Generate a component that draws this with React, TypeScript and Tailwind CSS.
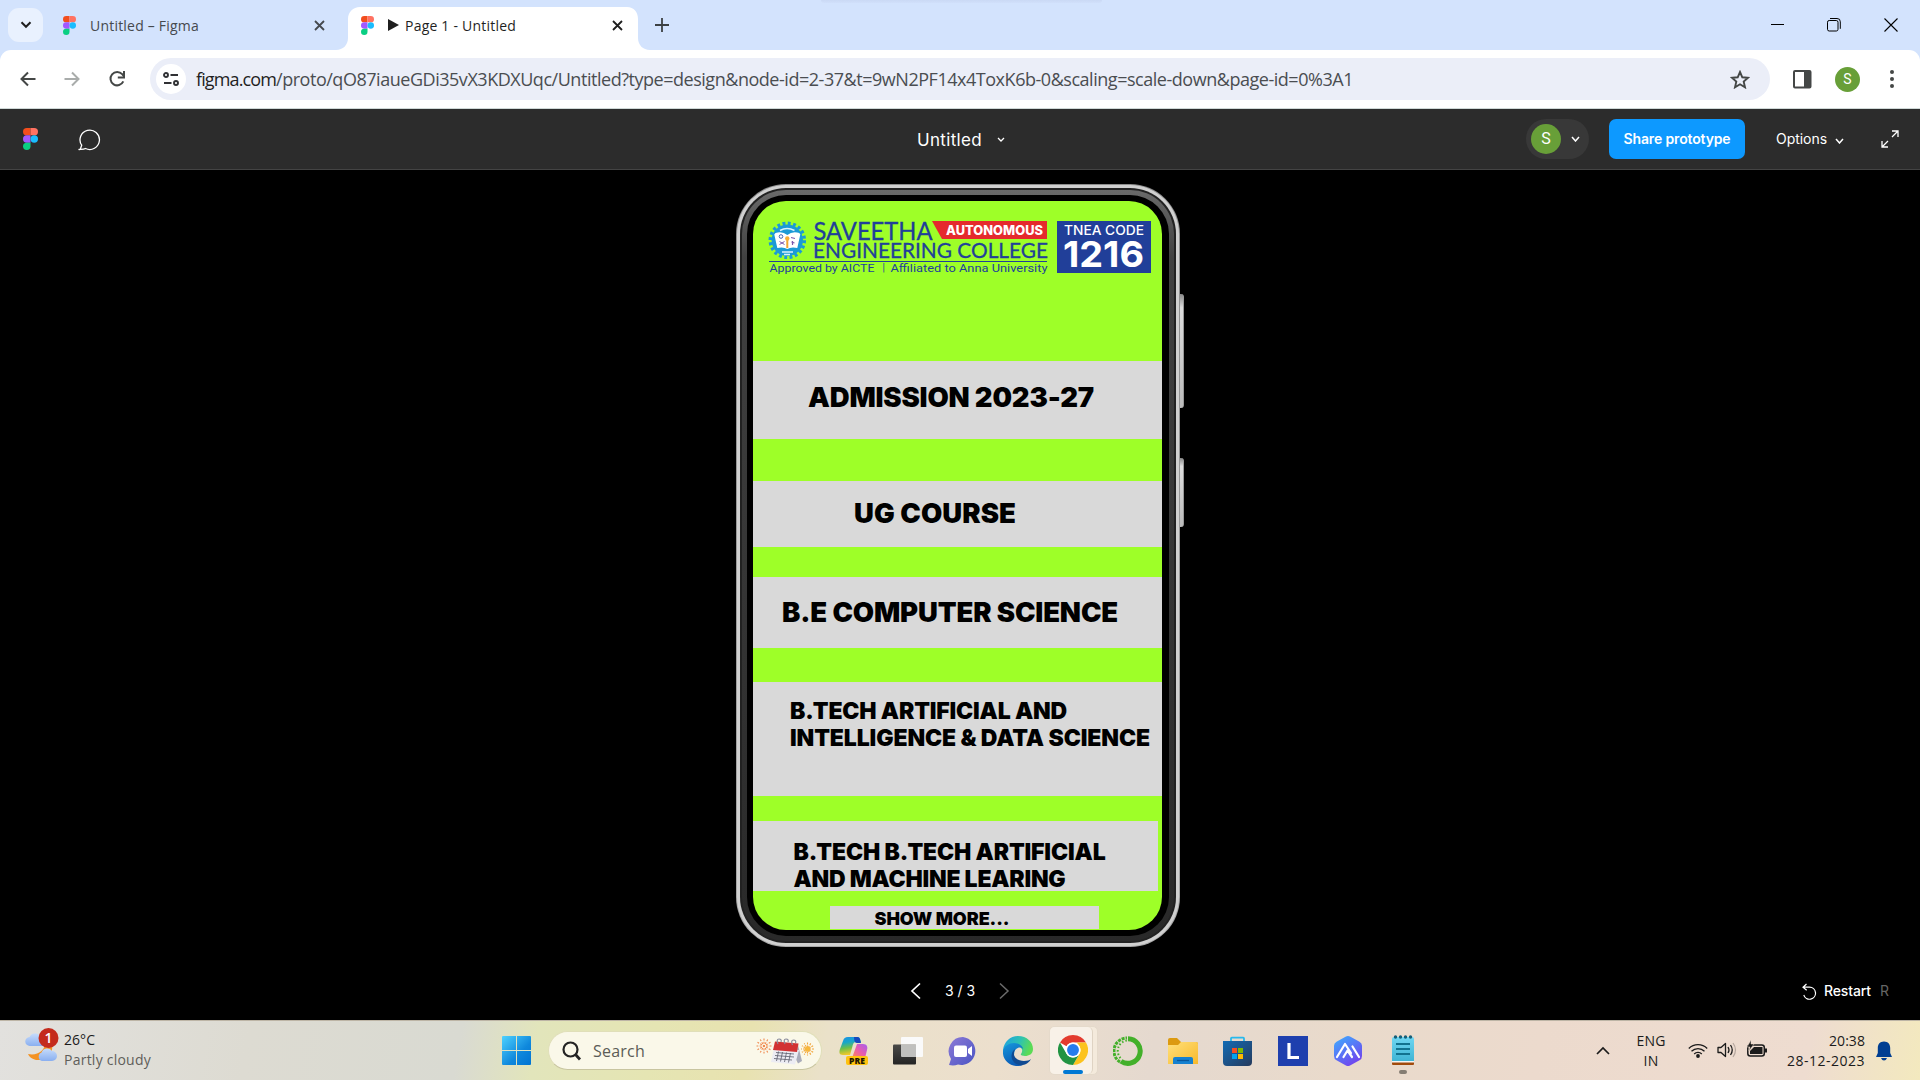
import { useLayoutEffect, useRef, useState } from "react";
import type { ReactNode } from "react";

const UI = "font-['Open_Sans','Noto_Sans',sans-serif]";
const INTER = "font-['Inter',sans-serif] [font-optical-sizing:none]";

// Single-line label whose tracking is computed so that it fills the given width.
function Label({ w, className = "", children }: { w: number; className?: string; children: string }) {
  const ref = useRef<HTMLSpanElement>(null);
  const [gap, setGap] = useState(0);
  useLayoutEffect(() => {
    const el = ref.current;
    if (el) setGap((w - el.getBoundingClientRect().width) / Math.max(1, children.length));
  }, [w, children]);
  return (
    <span ref={ref} className={`block w-max shrink-0 whitespace-pre ${className}`} style={{ letterSpacing: `${gap}px` }}>
      {children}
    </span>
  );
}

function Icon({ w, h, box, className = "", children }: { w: number; h: number; box?: string; className?: string; children: ReactNode }) {
  return (
    <svg width={w} height={h} viewBox={box ?? `0 0 ${w} ${h}`} fill="none" className={`block shrink-0 ${className}`}>
      {children}
    </svg>
  );
}

function FigmaLogo({ w, h, className = "" }: { w: number; h: number; className?: string }) {
  return (
    <svg width={w} height={h} viewBox="0 0 20 30" preserveAspectRatio="none" className={`block shrink-0 ${className}`}>
      <path d="M5 0h5v10H5A5 5 0 0 1 5 0z" fill="#f24e1e" />
      <path d="M10 0h5a5 5 0 0 1 0 10h-5z" fill="#ff7262" />
      <path d="M5 10h5v10H5a5 5 0 0 1 0-10z" fill="#a259ff" />
      <circle cx="15" cy="15" r="5" fill="#1abcfe" />
      <path d="M5 20h5v5a5 5 0 1 1-5-5z" fill="#0acf83" />
    </svg>
  );
}

function TabClose({ color, className }: { color: string; className: string }) {
  return (
    <Icon w={11} h={11} className={className}>
      <path d="M1 1l9 9M10 1l-9 9" stroke={color} strokeWidth="1.8" />
    </Icon>
  );
}

function Chevron({ w, h, className = "", sw = 1.5 }: { w: number; h: number; className?: string; sw?: number }) {
  return (
    <Icon w={w} h={h} className={className}>
      <path d={`M1 1L${w / 2} ${h - 1}L${w - 1} 1`} stroke="#fff" strokeWidth={sw} />
    </Icon>
  );
}

function TabStrip() {
  return (
    <div className={`flex h-[50px] items-start bg-[#d3e3fd] text-[14px] ${UI}`}>
      <div className="ml-2 mt-2 flex h-[34px] w-[35px] shrink-0 items-center justify-center rounded-[11px] bg-[#e9f1fe]">
        <Icon w={12} h={8}>
          <path d="M1.500 1.200L6 5.800l4.500-4.600" stroke="#1f1f1f" strokeWidth="2" />
        </Icon>
      </div>
      <FigmaLogo w={13} h={19} className="ml-[20px] mt-4" />
      <Label w={109} className="ml-[14px] mt-4 leading-5 text-[#45494e]">Untitled – Figma</Label>
      <TabClose color="#45494e" className="ml-[115px] mt-5" />
      <Icon w={314} h={43} className="ml-[11px] mt-[7px]">
        <path d="M0 43c7 0 12-5 12-12V12C12 5 17 0 24 0h267c7 0 11 5 11 12v19c0 7 5 12 12 12z" fill="#fff" />
      </Icon>
      <div className="-ml-[314px] flex w-[314px] shrink-0">
        <FigmaLogo w={13} h={19} className="ml-[25px] mt-4" />
        <Icon w={11} h={12} className="ml-[14px] mt-[19px]">
          <path d="M0 0l11 6-11 6z" fill="#1f1f1f" />
        </Icon>
        <Label w={111} className="ml-[6px] mt-4 leading-5 text-[#1f1f1f]">Page 1 - Untitled</Label>
        <TabClose color="#1f1f1f" className="ml-[96px] mt-5" />
      </div>
      <Icon w={14} h={14} className="ml-[5px] mt-[18px]">
        <path d="M7 0v14M0 7h14" stroke="#3c4043" strokeWidth="1.800" />
      </Icon>
      <div className="ml-[152px] h-[3px] w-[281px] rounded-b-lg bg-linear-to-b from-[#cad9f5] to-[#d1e0fa]" />
      <div className="mr-[22px] ml-auto mt-[18px] flex items-center">
        <Icon w={13} h={14}><path d="M0 6.500h13" stroke="#000" /></Icon>
        <Icon w={14} h={14} className="ml-[43px]">
          <rect x=".5" y="2.500" width="10.500" height="10.500" rx="1.700" stroke="#000" />
          <path d="M3 .5h7A3.200 3.200 0 0 1 13.300 3.800v7" stroke="#000" />
        </Icon>
        <Icon w={14} h={14} className="ml-[43px]">
          <path d="M.5 .5l13 13M13.500.5l-13 13" stroke="#000" strokeWidth="1.100" />
        </Icon>
      </div>
    </div>
  );
}

function AddressBar() {
  return (
    <div className="flex h-[59px] bg-[#d3e3fd]">
      <div className="flex h-[59px] w-full items-center rounded-t-[11px] border-b border-[#cfd8d7] bg-white">
        <Icon w={16} h={16} className="ml-5">
          <path d="M15.500 8H2M8 1.500L1.500 8 8 14.500" stroke="#444746" strokeWidth="2" />
        </Icon>
        <Icon w={16} h={16} className="ml-7">
          <path d="M.5 8H14M8 1.500L14.500 8 8 14.500" stroke="#a9acab" strokeWidth="2" />
        </Icon>
        <Icon w={18} h={18} className="ml-[28px]">
          <path d="M15.300 11.400A6.700 6.700 0 1 1 14.200 4.200L16 6.500" stroke="#444746" strokeWidth="2" />
          <path d="M16 1v6.500H9.800" stroke="#444746" strokeWidth="2" />
        </Icon>
        <div className="ml-[24px] flex h-[42px] w-[1620px] shrink-0 items-center rounded-full bg-[#ebeef8]">
          <div className="ml-[6px] flex size-[30px] shrink-0 items-center justify-center rounded-full bg-white">
            <Icon w={16} h={14}>
              <g stroke="#303134" strokeWidth="1.900">
                <circle cx="3" cy="3" r="2" />
                <path d="M7.500 3H15M1 11h7.500" />
                <circle cx="13" cy="11" r="2" />
              </g>
            </Icon>
          </div>
          <div className={`ml-[10px] flex w-[1156px] shrink-0 text-[18px] leading-[26px] ${UI}`}>
            <Label w={80} className="text-[#1f1f1f]">figma.com</Label>
            <Label w={1077} className="text-[#4a4d51]">
              /proto/qO87iaueGDi35vX3KDXUqc/Untitled?type=design&node-id=2-37&t=9wN2PF14x4ToxK6b-0&scaling=scale-down&page-id=0%3A1
            </Label>
          </div>
          <Icon w={20} h={19} className="ml-[378px]">
            <path d="M10 2l2.300 5.300 5.700.5-4.300 3.800 1.300 5.700-5-3-5 3 1.300-5.700L2 7.800l5.700-.5z" stroke="#444746" strokeWidth="1.900" />
          </Icon>
        </div>
        <Icon w={19} h={19} className="ml-[23px]">
          <rect x="1" y="1" width="16.500" height="16.500" rx="1" stroke="#444746" strokeWidth="2" />
          <path d="M11 1h6.500v16.500H11z" fill="#444746" />
        </Icon>
        <div className="ml-[23px] flex size-[25px] shrink-0 items-center justify-center rounded-full bg-[#689f38] font-[Roboto] text-[14px] text-white">S</div>
        <Icon w={4} h={18} className="ml-[30px]">
          <g fill="#444746"><circle cx="2" cy="2" r="2" /><circle cx="2" cy="9" r="2" /><circle cx="2" cy="16" r="2" /></g>
        </Icon>
      </div>
    </div>
  );
}

function PrototypeBar() {
  return (
    <div className={`flex h-[61px] items-center border-b border-[#444] bg-[#2c2c2c] text-white ${INTER}`}>
      <FigmaLogo w={15} h={22} className="ml-[23px]" />
      <Icon w={24} h={22} className="ml-[40px] mt-px">
        <path d="M2.300 20.300 L3.700 16.200 A9.700 9.700 0 1 1 7.500 19.500 C6 20.400 4 20.300 1 20.500 Z" stroke="#fff" strokeWidth="1.300" strokeLinejoin="round" />
      </Icon>
      <Label w={65} className="ml-[815px] mt-px text-[17px] leading-6">Untitled</Label>
      <Chevron w={8} h={5} className="ml-[15px]" sw={1.300} />
      <div className="ml-[521px] flex h-10 w-[63px] shrink-0 items-center rounded-full bg-[#383838]">
        <div className="ml-[5px] flex size-[30px] items-center justify-center rounded-full bg-[#689f38] font-[Roboto] text-[16px]">S</div>
        <Chevron w={9} h={6} className="ml-[10px]" />
      </div>
      <div className="ml-5 flex h-10 w-[136px] shrink-0 items-center justify-center rounded-[7px] bg-[#0d99ff]">
        <Label w={107} className="-mt-px text-[14px] font-semibold">Share prototype</Label>
      </div>
      <Label w={51} className="-mt-px ml-[31px] text-[14px]">Options</Label>
      <Chevron w={9} h={6} className="ml-2 mt-[3px]" />
      <Icon w={18} h={18} className="ml-[37px]">
        <path d="M11 1h6v6M17 1l-6 6M1 11v6h6M1 17l6-6" stroke="#fff" strokeWidth="1.300" />
      </Icon>
    </div>
  );
}

function CollegeLogo() {
  return (
    <svg width="384" height="74" viewBox="767 201 384 74" className="ml-[14px] block shrink-0 overflow-visible font-normal">
      <g>
        <circle cx="787.300" cy="240.300" r="17" fill="none" stroke="#1b9ad6" strokeWidth="3.500" strokeDasharray="2.900 2.440" />
        <circle cx="787.300" cy="240.300" r="15.700" fill="#1b9ad6" />
        <path d="M780 230.500q7-4 14.500 0M782 252h11M784 254.500h6" stroke="#d9f1fb" strokeWidth="1.500" fill="none" />
        <path d="M775.500 233q7-2 11.800 2 5-4 12-2l1 1.500-3 13.500q-6-1.500-10 1-4-2.500-10-1l-3-13.500z" fill="#fff" />
        <circle cx="781" cy="236.500" r="1.800" fill="none" stroke="#3d63b4" />
        <path d="M779.500 241.500l5 3m0-3l-5 3" stroke="#7b58ad" strokeWidth="1" />
        <path d="M791 237.500l4 1M791.500 242l3 1m-2-2v4" stroke="#7b58ad" strokeWidth="1.200" />
        <path d="M787.300 238v10" stroke="#f0a62f" strokeWidth="2" />
        <circle cx="787.300" cy="238.500" r="2.200" fill="#f5ae37" />
      </g>
      <path d="M932 221h115v18h-105z" fill="#e52a2d" />
      <path d="M769 261.500h278" stroke="#213f99" strokeWidth="1.200" />
      <rect x="1057" y="221" width="94" height="52" fill="#213f99" />
      <g fill="#213f99">
        <text x="813.500" y="240" textLength="119" lengthAdjust="spacingAndGlyphs" fontFamily="Lato" fontSize="25.500" stroke="#213f99" strokeWidth=".3">SAVEETHA</text>
        <text x="813" y="258" textLength="235" lengthAdjust="spacingAndGlyphs" fontFamily="Lato" fontSize="21" stroke="#213f99" strokeWidth=".3">ENGINEERING COLLEGE</text>
        <text x="769.500" y="272" textLength="105" lengthAdjust="spacingAndGlyphs" fontFamily="Roboto" fontSize="10.500">Approved by AICTE</text>
        <text x="882.500" y="271" fontFamily="Roboto" fontSize="10">|</text>
        <text x="890.500" y="272" textLength="157" lengthAdjust="spacingAndGlyphs" fontFamily="Roboto" fontSize="10.500">Affiliated to Anna University</text>
      </g>
      <g fill="#fff">
        <text x="946" y="235" textLength="97" lengthAdjust="spacingAndGlyphs" fontFamily="Inter" fontWeight="800" fontSize="13">AUTONOMOUS</text>
        <text x="1064" y="235" textLength="80" lengthAdjust="spacingAndGlyphs" fontFamily="Inter" fontWeight="500" fontSize="13">TNEA CODE</text>
        <text x="1063" y="267" textLength="81" lengthAdjust="spacingAndGlyphs" fontFamily="Inter" fontWeight="700" fontSize="36">1216</text>
      </g>
    </svg>
  );
}

function Phone() {
  return (
    <div className="flex">
      <div className="flex h-[763px] w-[444px] shrink-0 rounded-[50px] bg-linear-to-b from-[#8d8d8d] to-[#a9a9a9] p-px">
        <div className="flex w-full rounded-[49px] bg-[#d0d0d0] p-[3px]">
          <div className="flex w-full rounded-[46px] bg-[#222] p-[2px]">
            <div className="flex w-full rounded-[44px] bg-linear-to-b from-[#6a6a6a] via-[#414141] via-[9%] to-[#292929] p-[5px]">
              <div className="flex w-full rounded-[39px] bg-black pt-[6px] pr-[7px] pb-[6px] pl-[6px]">
                <div className={`flex w-full flex-col items-start overflow-hidden rounded-[33px] bg-[#9eff28] font-[860] text-black ${INTER}`}>
                  <div className="flex h-[160px] shrink-0">
                    <CollegeLogo />
                  </div>
                  <div className="h-[78px] w-full shrink-0 bg-[#d9d9d9] pt-[19px] pl-[55px]">
                    <Label w={286} className="text-[27.500px] leading-[34px]">ADMISSION 2023-27</Label>
                  </div>
                  <div className="mt-[42px] h-[66px] w-full shrink-0 bg-[#d9d9d9] pt-[15px] pl-[101px]">
                    <Label w={162} className="text-[27.500px] leading-[34px]">UG COURSE</Label>
                  </div>
                  <div className="mt-[30px] h-[71px] w-full shrink-0 bg-[#d9d9d9] pt-[18px] pl-[29px]">
                    <Label w={336} className="text-[27.500px] leading-[34px]">B.E COMPUTER SCIENCE</Label>
                  </div>
                  <div className="mt-[34px] h-[114px] w-full shrink-0 bg-[#d9d9d9] pt-[16px] pl-[37px] text-[23px] leading-[27px]">
                    <Label w={277}>B.TECH ARTIFICIAL AND</Label>
                    <Label w={360}>INTELLIGENCE & DATA SCIENCE</Label>
                  </div>
                  <div className="mt-[25px] h-[70px] w-[405px] shrink-0 bg-[#d9d9d9] pt-[18px] pl-[40.500px] text-[23px] leading-[27px]">
                    <Label w={312}>B.TECH B.TECH ARTIFICIAL</Label>
                    <Label w={272}>AND MACHINE LEARING</Label>
                  </div>
                  <div className="mt-[15px] ml-[77px] h-[23px] w-[269px] shrink-0 bg-[#d9d9d9] pl-[44.500px]">
                    <Label w={135} className="text-[18px] leading-[25px]">SHOW MORE...</Label>
                  </div>
                </div>
              </div>
            </div>
          </div>
        </div>
      </div>
      <div className="w-[4px] shrink-0 pt-[110px]">
        <div className="h-[114px] rounded-r-[3px] border-r border-[#999] bg-linear-to-b from-[#888] via-[#ddd] via-[12%] to-[#bbb]" />
        <div className="mt-[50px] h-[69px] rounded-r-[3px] border-r border-[#999] bg-linear-to-b from-[#888] via-[#ddd] via-[12%] to-[#bbb]" />
      </div>
    </div>
  );
}

function Stage() {
  return (
    <div className={`flex h-[850px] flex-col bg-black text-white ${INTER}`}>
      <div className="mt-[14px] ml-[736px]">
        <Phone />
      </div>
      <div className="mt-[34px] flex h-5 items-center text-[14px] leading-5">
        <Icon w={11} h={18} className="ml-[910px]">
          <path d="M10 1.500L2 9l8 7.500" stroke="#fff" strokeWidth="1.700" />
        </Icon>
        <Label w={30} className="-mt-px ml-[24px]">3 / 3</Label>
        <Icon w={11} h={18} className="ml-[24px]">
          <path d="M1 1.500L9 9l-8 7.500" stroke="#6b6b6b" strokeWidth="1.500" />
        </Icon>
        <Icon w={15} h={17} className="ml-[792px]">
          <path d="M4.500 1L1 4.200l3.700 3M1.500 4.200h6a6 6 0 1 1-5.700 7.800" stroke="#fff" strokeWidth="1.200" />
        </Icon>
        <Label w={47} className="ml-[7px] font-medium">Restart</Label>
        <span className="ml-[9px] text-[#666]">R</span>
      </div>
    </div>
  );
}

function WeatherIcon() {
  return (
    <Icon w={34} h={40}>
      <defs>
        <linearGradient id="cloud" x2="0" y2="1"><stop stopColor="#c6dcfb" /><stop offset="1" stopColor="#8aaff0" /></linearGradient>
      </defs>
      <path d="M27 17c2 9-8 16-16 15C7 31 4 29 3 26c9 2 17-3 17-11z" fill="#f39223" />
      <path d="M5 18a4.500 4.500 0 0 1-.5-9A6 6 0 0 1 15 8l5 10z" fill="url(#cloud)" />
      <path d="M17 33a4.500 4.500 0 0 1-.5-8.500 6 6 0 0 1 10.500-1.500 5 5 0 0 1 0 10z" fill="url(#cloud)" />
      <circle cx="23.500" cy="10" r="10" fill="#c42b1c" />
      <text x="23.500" y="15" textAnchor="middle" fontFamily="Open Sans" fontWeight="600" fontSize="14" fill="#fff">1</text>
    </Icon>
  );
}

function SearchBox() {
  const rays = [0, 30, 60, 90, 120, 150];
  return (
    <div className={`ml-[17px] flex h-[39px] w-[274px] shrink-0 items-center rounded-full border border-b-[#c8c5a0] border-[#e0dfb9] bg-[#faf8e9] ${UI}`}>
      <Icon w={19} h={20} className="ml-[13px]">
        <circle cx="8.500" cy="8.500" r="7" stroke="#242424" strokeWidth="2.200" />
        <path d="M13.500 13.500l4.500 5" stroke="#242424" strokeWidth="2.800" />
      </Icon>
      <Label w={52} className="ml-[12px] text-[16px] text-[#5c5c56]">Search</Label>
      <Icon w={60} h={30} className="ml-[111px]">
        {rays.map((a) => (
          <g key={a}>
            <path d="M0-7.500V7.500" transform={`translate(8 10) rotate(${a})`} stroke="#f08a50" strokeWidth="1.100" strokeDasharray="2 1.300" />
            <path d="M0-6.500V6.500" transform={`translate(51.500 13) rotate(${a})`} stroke="#f2a63c" strokeWidth="1.100" strokeDasharray="2 1" />
          </g>
        ))}
        <circle cx="51.500" cy="13" r="2.600" fill="#f6b73c" />
        <path d="M42 9l4 16-4 2.500-3-6z" fill="#a9abba" />
        <path d="M18 12l25 2-4 14.500-24-2.500z" fill="#ececf3" />
        <path d="M19 5.500l23.500 2-1.500 8.500-24-2z" fill="#d23233" />
        <path d="M22 8q-2-5 1-5t2 3M29 8q-2-5 1-5t2 3M36.500 9q-2-5 1-5t2 3" stroke="#8a8c9c" strokeWidth="1.200" />
        <path d="M20 16.500l18 1.500M19 19.500l19 1.500M18 22.500l18 1.500M22.500 15.500l-2 9.500M26.500 16l-2 9.500M30.500 16.500l-2 9.500M34.500 17l-2 9.500" stroke="#5a5c6c" strokeWidth=".8" />
      </Icon>
    </div>
  );
}

function TaskIcons() {
  return (
    <>
      <Icon w={30} h={30} className="ml-[17px]">
        <defs>
          <linearGradient id="cpA" x1="0" y1="0" x2=".2" y2="1"><stop stopColor="#1b8fe8" /><stop offset=".35" stopColor="#18a7c8" /><stop offset=".65" stopColor="#6cbf4a" /><stop offset="1" stopColor="#f1c829" /></linearGradient>
          <linearGradient id="cpB" x1="1" y1="0" x2="0" y2="1"><stop stopColor="#a45df0" /><stop offset=".5" stopColor="#e85cae" /><stop offset="1" stopColor="#ff8a52" /></linearGradient>
        </defs>
        <path d="M9 1h9c3 0 3 2 4 5h-5c-3 0-3 3-4 6l-2 7H4c-4 0-4-3-3-6l3-8c1-3 2-4 5-4z" fill="url(#cpA)" />
        <path d="M15 1h3c3 0 3 2 4 6h-4q-3 0-3-6z" fill="#1648bd" />
        <path d="M18 8h6c4 0 5 3 4 6l-2 8H13z" fill="url(#cpB)" />
        <rect x="7" y="20" width="22" height="9" rx="2" fill="#fec310" />
        <text x="18" y="28" textAnchor="middle" fontFamily="Open Sans" fontWeight="800" fontSize="8.500" fill="#1d1600">PRE</text>
      </Icon>
      <Icon w={30} h={30} className="ml-[24px]">
        <defs><linearGradient id="tv" x2="0" y2="1"><stop stopColor="#4a4a48" /><stop offset="1" stopColor="#242424" /></linearGradient></defs>
        <rect y="8.500" width="23" height="20" rx="1" fill="url(#tv)" />
        <path d="M9 1h20q1 0 1 1v18q0 1-1 1h-6V8.500H8V2q0-1 1-1z" fill="#fafafa" />
        <path d="M8 8.500h15V21H9q-1 0-1-1z" fill="#c0c0be" />
      </Icon>
      <Icon w={30} h={30} className="ml-[25px]">
        <defs><linearGradient id="chat" x2="1" y2="1"><stop stopColor="#8c7ad6" /><stop offset="1" stopColor="#4a54c4" /></linearGradient></defs>
        <path d="M15 1a14 14 0 1 1-5 27.500Q6 30 1 29l2-6A14.200 14.200 0 0 1 15 1z" fill="url(#chat)" />
        <rect x="6" y="9.500" width="13" height="11.500" rx="2" fill="#fff" />
        <path d="M20 13l4-3v10l-4-3z" fill="#fff" />
      </Icon>
      <Icon w={30} h={30} className="ml-[25px]">
        <defs>
          <linearGradient id="edA" x2="1" y2=".3"><stop stopColor="#1a9ee8" /><stop offset=".6" stopColor="#2fc3b0" /><stop offset="1" stopColor="#5bdb55" /></linearGradient>
          <linearGradient id="edB" x2=".4" y2="1"><stop stopColor="#1799dd" /><stop offset="1" stopColor="#0b5bb5" /></linearGradient>
        </defs>
        <path d="M0 14C1 6 7 0 15 0c9 0 15 6 15 13 0 5-4 7-8 7-3 0-5-1-4-2 3-4 0-8-5-8C7 10 3 12 0 17z" fill="url(#edA)" />
        <path d="M0 15C1 10 6 7 11 7c5 0 9 3 9 6-2-3-9-2-9 6 0 6 4 9 9 10-11 4-21-4-20-14z" fill="url(#edB)" />
        <path d="M12 13c-4 8 3 12 9 12 3 0 6-1 7-2-2 4-7 7-12 6C8 27 6 18 12 13z" fill="#104a92" />
      </Icon>
      <div className="ml-[16px] flex h-[49px] w-[49px] shrink-0 rounded-[5px] border border-[#e5dacb] bg-[#f4eadc]">
        <div className="flex w-[43px] shrink-0 flex-col items-center rounded-[5px] border-r border-[#dfd3c3] bg-[#f8f1e8] pt-[8px]">
          <Icon w={30} h={30} box="0 0 48 48" className="ml-[3px]">
            <circle cx="24" cy="24" r="23.500" fill="#fff" />
            <path d="M24 0a24 24 0 0 1 20.800 12H24A12 12 0 0 0 13.600 18L3.200 12A24 24 0 0 1 24 0z" fill="#e33b2e" />
            <path d="M44.800 12A24 24 0 0 1 24 48l10.400-18A12 12 0 0 0 34.400 18L30 12z" fill="#fcc31e" />
            <path d="M3.200 12A24 24 0 0 0 24 48l10.400-18A12 12 0 0 1 13.600 30z" fill="#229342" />
            <circle cx="24" cy="24" r="12" fill="#fff" />
            <circle cx="24" cy="24" r="9.500" fill="#267ced" />
          </Icon>
          <div className="mt-[5px] ml-[3px] h-[4px] w-5 rounded-full bg-[#0078d4]" />
        </div>
      </div>
      <Icon w={30} h={30} className="ml-[15px]">
        <path d="M15 2.700A12.300 12.300 0 1 1 8 25.200" stroke="#43b02a" strokeWidth="5" />
        <path d="M7 26A13 13 0 0 1 14 2" stroke="#43b02a" strokeWidth="3" strokeDasharray="3 1" />
        <path d="M7.500 22A10.500 10.500 0 0 1 14 4.500" stroke="#43b02a" strokeWidth="2" strokeDasharray="1.500 2" />
      </Icon>
      <Icon w={30} h={30} className="ml-[25px]">
        <defs><linearGradient id="fo" x2="1" y2="1"><stop stopColor="#ffe07b" /><stop offset="1" stopColor="#f8b92b" /></linearGradient></defs>
        <path d="M0 4q0-2 2-2h7l4 4h15q2 0 2 2v6H0z" fill="#dc9a10" />
        <path d="M0 9h10l3-3h15q2 0 2 2v20H0z" fill="url(#fo)" />
        <path d="M5 28v-5q0-2 2-2h16q2 0 2 2v5z" fill="#1681d0" />
        <path d="M9 24.500h12" stroke="#08569b" strokeWidth="1.300" />
      </Icon>
      <Icon w={30} h={30} className="ml-[25px]">
        <defs><linearGradient id="st" x2="1" y2="1"><stop stopColor="#126bb4" /><stop offset="1" stopColor="#263a5c" /></linearGradient></defs>
        <path d="M8 6V2.500q0-.8.800-.8h11.400q.8 0 .8.800V6" stroke="#27b9ed" strokeWidth="1.800" />
        <path d="M0 5h29v21q0 4-4 4H4q-4 0-4-4z" fill="url(#st)" />
        <path d="M9 12h5v5H9z" fill="#f25022" /><path d="M15 12h5v5h-5z" fill="#7fba00" />
        <path d="M9 18h5v5H9z" fill="#00a4ef" /><path d="M15 18h5v5h-5z" fill="#ffb900" />
      </Icon>
      <div className="ml-[25px] flex size-[30px] shrink-0 items-center justify-center bg-[#1e3fae] text-white">
        <Icon w={12} h={18}><path d="M2 1v14.500h10" stroke="#fff" strokeWidth="3.200" /></Icon>
      </div>
      <Icon w={28} h={30} className="ml-[26px]">
        <defs><linearGradient id="hx" x2=".6" y2="1"><stop stopColor="#3cb0ff" /><stop offset="1" stopColor="#7046ee" /></linearGradient></defs>
        <path d="M11.500.8q2.500-1.500 5 0l9 5q2.500 1.500 2.500 4V20q0 3-2.500 4.300l-9 5q-2.500 1.500-5 0l-9-5Q0 23 0 20V9.800q0-2.500 2.500-4z" fill="url(#hx)" />
        <path d="M3 21l8-13 6 9M9.500 21l4-6.500 4.500 6.500M18.500 10.500l6.500 10.500" stroke="#fff" strokeWidth="2.200" strokeLinejoin="round" strokeLinecap="round" />
      </Icon>
      <div className="ml-[30px] flex h-10 w-[22px] shrink-0 flex-col items-center pt-px">
        <Icon w={22} h={30} className="mt-[3px]">
          <defs><linearGradient id="np" x2="0" y2="1"><stop stopColor="#6fd6f2" /><stop offset="1" stopColor="#3eb3d3" /></linearGradient></defs>
          <rect y="26" width="22" height="4" rx="1" fill="#a14a0c" />
          <path d="M0 4q0-2 2-2h18q2 0 2 2v23H0z" fill="url(#np)" />
          <path d="M0 26h22v1.500H0z" fill="#f4f4f4" />
          <path d="M4 9h14M4 14h14M4 19h14" stroke="#11728f" strokeWidth="1.800" />
          <g fill="#165f78"><circle cx="3.500" cy="2" r="1.700" /><circle cx="8.500" cy="2" r="1.700" /><circle cx="13.500" cy="2" r="1.700" /><circle cx="18.500" cy="2" r="1.700" /></g>
        </Icon>
        <div className="mt-[5px] h-[4px] w-2 shrink-0 rounded-full bg-[#857d73]" />
      </div>
    </>
  );
}

function Tray() {
  return (
    <div className={`ml-[182px] flex items-center text-[14px] leading-5 text-[#1b1b1b] ${UI}`}>
      <Icon w={14} h={9}><path d="M1 8l6-6 6 6" stroke="#1b1b1b" strokeWidth="1.700" /></Icon>
      <div className="ml-[26px] flex w-[30px] flex-col items-center">
        <Label w={29}>ENG</Label>
        <Label w={15}>IN</Label>
      </div>
      <Icon w={20} h={16} className="-mt-px ml-[22px]">
        <g stroke="#1b1b1b" strokeWidth="1.300">
          <path d="M.8 6.500a13 13 0 0 1 18.400 0" /><path d="M3.500 9.300a9.200 9.200 0 0 1 13 0" /><path d="M6.200 12a5.400 5.400 0 0 1 7.600 0" />
        </g>
        <circle cx="10" cy="14" r="1.900" fill="#1b1b1b" />
      </Icon>
      <Icon w={20} h={18} className="-mt-px ml-[9px]">
        <path d="M1 6.500h3l4.500-4v13l-4.500-4H1z" stroke="#1b1b1b" strokeWidth="1.300" strokeLinejoin="round" />
        <path d="M11 6q2 3 0 6M13.500 4q3.500 5 0 10" stroke="#1b1b1b" strokeWidth="1.300" />
        <path d="M16 2q5 7 0 14" stroke="#b5a79e" strokeWidth="1.200" />
      </Icon>
      <Icon w={20} h={18} className="-mt-[3px] ml-[10px]">
        <rect x=".8" y="5" width="16.500" height="11" rx="2.500" stroke="#1b1b1b" strokeWidth="1.500" />
        <path d="M7 7h8.500v7H3v-3z" fill="#1b1b1b" />
        <path d="M18 8.500h2v4h-2z" fill="#1b1b1b" />
        <path d="M4 0L0 7h3L2 11l5-7H4z" fill="#1b1b1b" stroke="#efdccf" strokeWidth=".5" />
      </Icon>
      <div className="ml-[20px] flex w-[78px] flex-col items-end">
        <Label w={36}>20:38</Label>
        <Label w={78}>28-12-2023</Label>
      </div>
      <Icon w={16} h={20} className="ml-[11px]">
        <path d="M8 .5c4 0 6.200 2.800 6.200 6.500v5l1.800 4H0l1.800-4V7C1.800 3.300 4 .5 8 .5z" fill="#003e92" />
        <path d="M5 17h6q-1 2.500-3 2.500T5 17z" fill="#003e92" />
      </Icon>
    </div>
  );
}

function Taskbar() {
  return (
    <div className="flex h-[60px] items-center border-t border-[#bdb5a6] bg-[linear-gradient(100deg,#e2e1de_0%,#dddbd2_13%,#d9dad2_24%,#e2e5bb_28%,#e5e5b3_34%,#e8e2b0_39%,#eae1c9_43%,#ecdfcd_52%,#e5d9cf_60%,#e9dacb_70%,#ecdacd_80%,#eedcd0_94%,#f3e9be_100%)]">
      <div className={`flex h-full w-[502px] shrink-0 pt-[7px] text-[14px] leading-5 ${UI}`}>
        <div className="ml-[25px]"><WeatherIcon /></div>
        <div className="ml-[5px] pt-[2px]">
          <Label w={31} className="text-[#1b1b1b]">26°C</Label>
          <Label w={87} className="text-[#5f5e5a]">Partly cloudy</Label>
        </div>
      </div>
      <Icon w={29} h={29}>
        <defs><linearGradient id="win" x2="1" y2="1"><stop stopColor="#4fd2ff" /><stop offset=".6" stopColor="#0f88dc" /><stop offset="1" stopColor="#0073d2" /></linearGradient></defs>
        <path d="M1 0h13v14H0V1q0-1 1-1zM15 0h13q1 0 1 1v13H15zM0 15h14v14H1q-1 0-1-1zM15 15h14v13q0 1-1 1H15z" fill="url(#win)" />
      </Icon>
      <SearchBox />
      <TaskIcons />
      <Tray />
    </div>
  );
}

export default function App() {
  return (
    <div className="flex h-[1080px] w-[1920px] flex-col overflow-hidden bg-black">
      <TabStrip />
      <AddressBar />
      <PrototypeBar />
      <Stage />
      <Taskbar />
    </div>
  );
}
